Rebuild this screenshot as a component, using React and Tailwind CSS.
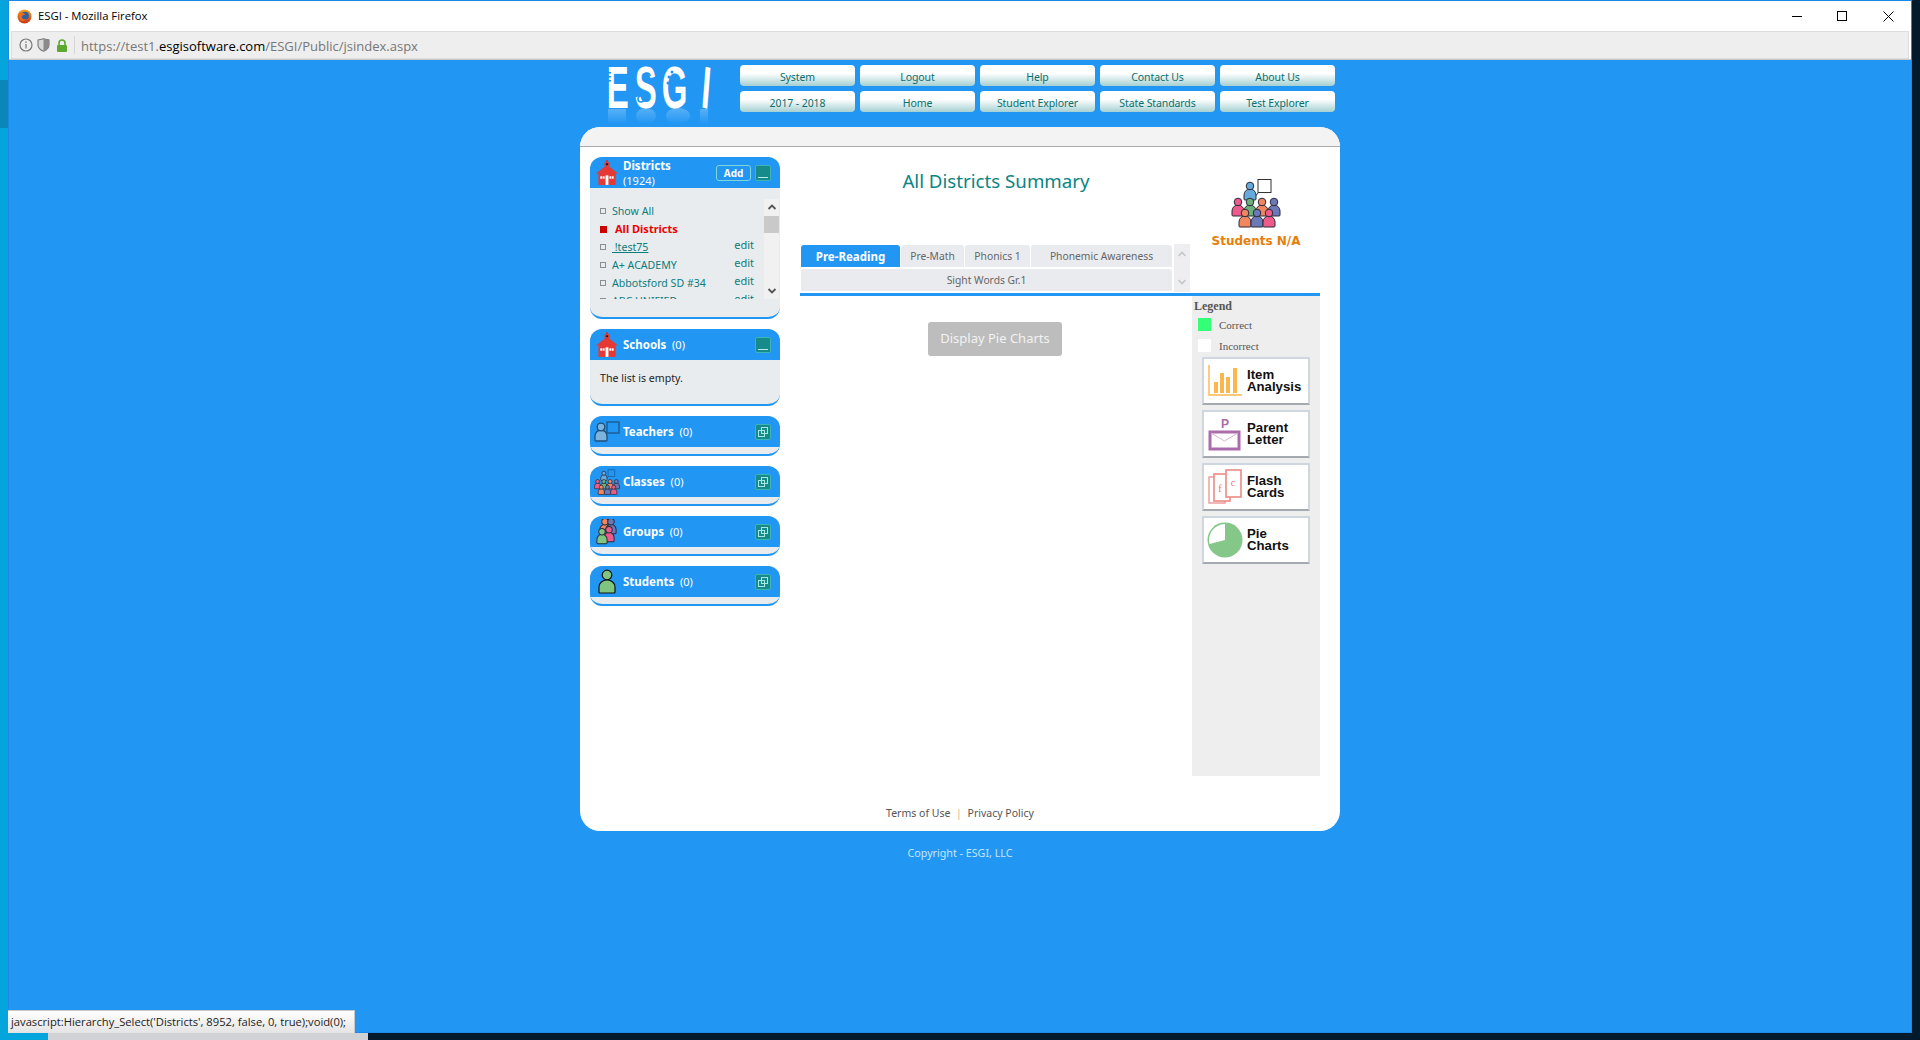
import React from 'react';

const NAV_ROWS = [
  ['System', 'Logout', 'Help', 'Contact Us', 'About Us'],
  ['2017 - 2018', 'Home', 'Student Explorer', 'State Standards', 'Test Explorer'],
];

const DISTRICTS = [
  { name: '\u00a0!test75', underline: true },
  { name: 'A+ ACADEMY' },
  { name: 'Abbotsford SD #34' },
  { name: 'ABC UNIFIED' },
];

// one figure of the people icons, drawn round (x, y)
const Person = ({ x, y, s = 1, fill, stroke = '#2b2b3a', sw = 1 }) => (
  <g transform={`translate(${x} ${y}) scale(${s})`} stroke={stroke} strokeWidth={sw / s} strokeLinejoin="round" fill={fill}>
    <path d="M-6 8 v-4 a6 6 0 0 1 12 0 v4 q0 1 -1 1 h-10 q-1 0 -1 -1 z" />
    <circle cx="0" cy="-5" r="3.8" />
  </g>
);

const ClassGroup = ({ sw = 1, board = '#333', boardFill = '#fff' }) => (
  <>
    <rect x="27" y="1.5" width="13" height="13" fill={boardFill} stroke={board} strokeWidth={sw} />
    <path d="M27 15 L22 21" stroke={board} strokeWidth={sw} />
    <Person x={19} y={13} fill="#66a9dc" sw={sw} />
    <Person x={7} y={29} fill="#ee5b8b" sw={sw} />
    <Person x={43} y={29} fill="#6c79b8" sw={sw} />
    <Person x={19} y={29} fill="#6cb07a" sw={sw} />
    <Person x={31} y={29} fill="#f2875f" sw={sw} />
    <Person x={14} y={40} fill="#f2875f" sw={sw} />
    <Person x={26} y={40} fill="#6c79b8" sw={sw} />
    <Person x={38} y={40} fill="#ee5b8b" sw={sw} />
  </>
);

const SchoolIcon = () => (
  <svg className="shrink-0" width="22" height="25" viewBox="0 0 23 26">
    <rect x="10.5" y="0" width="2" height="3" fill="#c63a3a" />
    <circle cx="11.5" cy="4.5" r="2.8" fill="#e53935" />
    <circle cx="11.5" cy="4.5" r="1.2" fill="#111" />
    <path d="M0 14 L11.5 5 L23 14 Z" fill="#e53935" />
    <rect x="2.5" y="13" width="18" height="13" fill="#e53935" />
    <rect x="4.5" y="17" width="2" height="2.5" fill="#fff" />
    <rect x="7" y="17" width="2" height="2.5" fill="#fff" />
    <rect x="14" y="17" width="2" height="2.5" fill="#fff" />
    <rect x="16.5" y="17" width="2" height="2.5" fill="#fff" />
    <rect x="10" y="16" width="3" height="10" fill="#fff" />
  </svg>
);

const TeacherIcon = () => (
  <svg className="shrink-0" width="26" height="22" viewBox="0 0 26 22">
    <rect x="13" y="1" width="12" height="11" fill="none" stroke="#1a5c92" strokeWidth="1.4" />
    <path d="M13 13 L10 16" stroke="#1a5c92" strokeWidth="1.2" />
    <Person x={7} y={11} s={1} fill="#7db4de" stroke="#1f4e79" sw={1.3} />
  </svg>
);

const ClassesIcon = () => (
  <svg className="shrink-0" width="26" height="26" viewBox="0 0 50 50">
    <ClassGroup sw={1.4} board="#1a5c92" boardFill="none" />
  </svg>
);

const GroupsIcon = () => (
  <svg className="shrink-0" width="22" height="26" viewBox="0 0 22 26">
    <Person x={9} y={7} s={0.85} fill="#f2875f" />
    <Person x={15} y={7} s={0.85} fill="#6c79b8" />
    <Person x={13} y={15} s={0.85} fill="#ee5b8b" />
    <Person x={6} y={17} s={0.85} fill="#7fc47f" />
  </svg>
);

const StudentIcon = () => (
  <svg className="shrink-0" width="18" height="25" viewBox="0 0 18 25">
    <circle cx="9" cy="6" r="4.8" fill="#7fc47f" stroke="#111" strokeWidth="1.2" />
    <path d="M1 23 v-5 a8 7 0 0 1 16 0 v5 q0 1 -1 1 h-14 q-1 0 -1 -1 z" fill="#7fc47f" stroke="#111" strokeWidth="1.2" />
  </svg>
);

const CollapseBtn = () => (
  <span className="flex w-4 h-4 items-end justify-center rounded-[2px] border border-[#3db5b5] bg-[#178a8c] pb-[2px]">
    <span className="block w-[10px] h-px bg-[#b5eee6]" />
  </span>
);

const ExpandBtn = () => (
  <span className="flex w-4 h-4 items-center justify-center rounded-[2px] border border-[#3db5b5] bg-[#178a8c]">
    <svg width="12" height="12" viewBox="0 0 12 12" fill="none" stroke="#a5e8df" strokeWidth="1">
      <rect x="4.5" y="1.5" width="6" height="6" />
      <rect x="1.5" y="4.5" width="6" height="6" />
    </svg>
  </span>
);

const Section = ({ icon, title, count, open, add, children }) => (
  <div className="rounded-[12px] overflow-hidden border-b-2 border-[#2196f3] bg-[#e9ecee]">
    <div className="h-[31px] flex items-center bg-[#2196f3] pl-[6px] pr-[9px] text-white text-[11px] leading-[15px]">
      <span className="w-[22px] mr-[5px] flex justify-center shrink-0">{icon}</span>
      {add ? (
        <span className="flex-1">
          <b className="block text-[11.5px]">{title}</b>
          ({count})
        </span>
      ) : (
        <span className="flex-1">
          <b className="text-[11.5px]">{title}</b>&nbsp; ({count})
        </span>
      )}
      {add && (
        <span className="mr-[4px] w-[35px] h-4 rounded-[3px] border border-[#7fd6d6] text-center font-bold text-[10px] leading-[14px]">Add</span>
      )}
      {open ? <CollapseBtn /> : <ExpandBtn />}
    </div>
    {children}
    {!open && <div className="h-[7px]" />}
  </div>
);

const DistrictList = () => (
  <div className="h-[129px] pt-[11px] flex items-start">
    <div className="w-[174px] h-[100px] overflow-hidden pl-[10px] pr-[10px] pt-[3px] text-[10.6px] leading-[18px] text-[#0b7c7c]">
      <div className="h-[18px] flex items-center">
        <span className="w-[6px] h-[6px] border border-[#8a8f92] mr-[6px]" />
        Show All
      </div>
      <div className="h-[18px] flex items-center text-[11px] text-[#f00000] font-bold">
        <span className="w-[7px] h-[7px] bg-[#cc0000] mr-[8px]" />
        All Districts
      </div>
      {DISTRICTS.map((d) => (
        <div key={d.name} className="h-[18px] flex items-center">
          <span className="w-[6px] h-[6px] border border-[#8a8f92] mr-[6px] shrink-0" />
          <span className={d.underline ? 'underline flex-1' : 'flex-1'}>{d.name}</span>
          <span className="-mt-[4px] text-[11px]">edit</span>
        </div>
      ))}
    </div>
    <div className="w-[15px] h-[100px] bg-[#f1f1f1] flex flex-col items-center">
      <svg className="mt-[4px]" width="10" height="8" viewBox="0 0 10 8" fill="none" stroke="#555" strokeWidth="1.8"><path d="M1.5 6 L5 2.5 L8.5 6" /></svg>
      <span className="block w-full h-[17px] bg-[#c9c9c9] mt-[5px]" />
      <svg className="mt-auto mb-[4px]" width="10" height="8" viewBox="0 0 10 8" fill="none" stroke="#555" strokeWidth="1.8"><path d="M1.5 2 L5 5.5 L8.5 2" /></svg>
    </div>
  </div>
);

const ItemAnalysisIcon = () => (
  <svg width="36" height="34" viewBox="0 0 36 34" fill="#fcb64e">
    <path d="M2 1 V31 H35" fill="none" stroke="#fcb64e" strokeWidth="1.4" />
    <rect x="7" y="18" width="4" height="11" />
    <rect x="13" y="9" width="4" height="20" />
    <rect x="19" y="13" width="4" height="16" />
    <rect x="26" y="4" width="4" height="25" />
  </svg>
);

const ParentLetterIcon = () => (
  <svg width="34" height="34" viewBox="0 0 34 34">
    <text x="17" y="11" textAnchor="middle" fontFamily="Liberation Sans, sans-serif" fontWeight="700" fontSize="12" fill="#ab6cab">P</text>
    <rect x="2" y="15" width="29" height="17" fill="#fff" stroke="#ab6cab" strokeWidth="3" />
    <path d="M3 16 L16.5 24 L30 16" fill="none" stroke="#d9b5d9" strokeWidth="1" />
  </svg>
);

const FlashCardsIcon = () => (
  <svg width="34" height="36" viewBox="0 0 34 36">
    <rect x="1" y="8" width="16" height="26" fill="#fff" stroke="#ee9a96" strokeWidth="1.4" />
    <rect x="6" y="5" width="16" height="27" fill="#fff" stroke="#ec8a86" strokeWidth="1.6" />
    <rect x="18" y="1" width="15" height="27" fill="#fff" stroke="#ec8a86" strokeWidth="1.6" />
    <text x="12" y="23" textAnchor="middle" fontFamily="Liberation Serif, serif" fontSize="10" fill="#ee6f6f">f</text>
    <text x="25" y="17" textAnchor="middle" fontFamily="Liberation Serif, serif" fontSize="10" fill="#ee6f6f">c</text>
  </svg>
);

const PieChartsIcon = () => (
  <svg width="36" height="36" viewBox="0 0 36 36">
    <circle cx="18" cy="18" r="17.5" fill="#84c788" />
    <path d="M18 18 L18 2 A16 16 0 0 0 2.5 22 Z" fill="#fff" />
  </svg>
);

const TOOLS = [
  { id: 'item', icon: <ItemAnalysisIcon />, lines: ['Item', 'Analysis'] },
  { id: 'parent', icon: <ParentLetterIcon />, lines: ['Parent', 'Letter'] },
  { id: 'flash', icon: <FlashCardsIcon />, lines: ['Flash', 'Cards'] },
  { id: 'pie', icon: <PieChartsIcon />, lines: ['Pie', 'Charts'] },
];

const FirefoxIcon = () => (
  <svg width="15" height="15" viewBox="0 0 16 16">
    <defs>
      <linearGradient id="ffg" x1="0" y1="0" x2="0" y2="1">
        <stop offset="0" stopColor="#f5a623" />
        <stop offset="1" stopColor="#c8321c" />
      </linearGradient>
    </defs>
    <circle cx="8" cy="8" r="7.5" fill="url(#ffg)" />
    <circle cx="8.5" cy="7" r="4.2" fill="#2f5f9e" />
    <path d="M3 4 Q7 3 9 6 Q5 6 5 9 Q6 12 10 11 Q7 14 4 12 Q1 8 3 4 Z" fill="#e8701e" />
  </svg>
);

const Logo = () => (
  <svg width="112" height="62" viewBox="0 0 112 62">
    <defs>
      <linearGradient id="fade" x1="0" y1="0" x2="0" y2="1">
        <stop offset="0" stopColor="#fff" stopOpacity="0.25" />
        <stop offset="1" stopColor="#fff" stopOpacity="0" />
      </linearGradient>
    </defs>
    <g transform="scale(0.55 1)">
      <text x="5" y="44" rotate="0 0 0 8" fontFamily="Liberation Sans, sans-serif" fontWeight="700" fontSize="60" fill="#fff">
        <tspan x="5">E</tspan>
        <tspan x="56">S</tspan>
        <tspan x="105">G</tspan>
        <tspan x="175" dy="-1" rotate="8">I</tspan>
      </text>
    </g>
    {/* cut-outs that give the letters their curls */}
    <g fill="none" stroke="#2196f3" strokeWidth="1.6">
      <path d="M46 12 a3 3 0 1 0 -3 3" />
      <path d="M40 35 a3 3 0 1 1 -3 -3" />
    </g>
    <g fill="#2196f3">
      <circle cx="68" cy="8" r="1.5" />
      <circle cx="65" cy="13" r="1.5" />
      <circle cx="64" cy="19" r="1.5" />
      <rect x="3" y="8" width="4" height="1.5" />
      <rect x="3" y="12" width="4" height="1.5" />
      <rect x="3" y="16" width="4" height="1.5" />
    </g>
    {/* faint reflection below the word */}
    <g fill="url(#fade)">
      <rect x="4" y="45" width="18" height="15" />
      <ellipse cx="42" cy="52" rx="10" ry="8" />
      <ellipse cx="74" cy="52" rx="12" ry="8" />
      <rect x="96" y="45" width="8" height="15" />
    </g>
  </svg>
);

export default function App() {
  return (
    <div className="relative h-[1040px] w-[1920px] overflow-hidden bg-[#021a2b] font-['Noto_Sans',sans-serif]">
      <div className="flex h-[1033px]">
        <div className="w-2 bg-[#04a4dc] flex flex-col">
          <div className="h-[80px]" />
          <div className="h-[48px] bg-[#0a87b8]" />
        </div>

        <div className="flex-1 flex flex-col border-t border-x border-b border-[#1e88e5] bg-[#2196f3]">
          {/* title bar */}
          <div className="h-[30px] shrink-0 bg-white flex items-center pl-[8px] pr-[17px] text-[11.3px] text-black font-['Open_Sans',sans-serif]">
            <FirefoxIcon />
            <span className="ml-[6px]">ESGI - Mozilla Firefox</span>
            <span className="ml-auto flex items-center">
              <span className="block w-[10px] h-px bg-black mr-[35px]" />
              <span className="block w-[10px] h-[10px] border border-black mr-[36px]" />
              <svg width="11" height="11" viewBox="0 0 11 11" stroke="#000" strokeWidth="1"><path d="M0.5 0.5 L10.5 10.5 M10.5 0.5 L0.5 10.5" /></svg>
            </span>
          </div>

          {/* url bar */}
          <div className="h-[29px] shrink-0 bg-white px-[2px] border-b border-[#c8c8c8]">
            <div className="h-[28px] bg-[#eeeeee] border border-[#dddddd] flex items-center pl-[7px] text-[13px] text-[#777] font-['Open_Sans',sans-serif]">
              <svg width="14" height="14" viewBox="0 0 14 14" fill="none" stroke="#777" strokeWidth="1.2">
                <circle cx="7" cy="7" r="6" />
                <path d="M7 6 V10.5 M7 3.5 V5" />
              </svg>
              <svg className="ml-[4px]" width="13" height="14" viewBox="0 0 13 14">
                <path d="M1 2 L6.5 0.8 L12 2 V7 Q12 11 6.5 13.2 Q1 11 1 7 Z" fill="#d8d8d8" stroke="#777" strokeWidth="1.1" />
                <path d="M6.5 1 L12 2 V7 Q12 11 6.5 13 Z" fill="#8a8a8a" />
              </svg>
              <svg className="ml-[6px]" width="12" height="13" viewBox="0 0 12 13">
                <path d="M3 6 V4 a3 3 0 0 1 6 0 V6" fill="none" stroke="#5da82f" strokeWidth="1.6" />
                <rect x="1" y="6" width="10" height="7" rx="1" fill="#5da82f" />
              </svg>
              <span className="ml-[6px] h-[18px] w-px bg-[#d6d6d6]" />
              <span className="ml-[6px] mt-[3px]">
                https://test1.<span className="text-black">esgisoftware.com</span>/ESGI/Public/jsindex.aspx
              </span>
            </div>
          </div>

          {/* page */}
          <div className="flex-1 flex flex-col items-center">
            <div className="w-[760px] h-[67px] flex shrink-0">
              <div className="w-[160px] pl-[24px] pt-[4px]">
                <Logo />
              </div>
              <div className="w-[595px] pt-[5px] flex flex-col gap-[5px]">
                {NAV_ROWS.map((row) => (
                  <div key={row[0]} className="flex gap-[5px]">
                    {row.map((label) => (
                      <div key={label} className="w-[115px] h-[21px] rounded-[4px] bg-linear-to-b from-white from-40% to-[#a5d0d2] text-center text-[10.5px] tracking-[-0.1px] leading-[24px] text-[#0a6f6f]">
                        {label}
                      </div>
                    ))}
                  </div>
                ))}
              </div>
            </div>

            <div className="w-[760px] h-[704px] bg-white rounded-[20px] overflow-hidden shrink-0">
              <div className="h-[20px] bg-[#f3f3f3] border-b border-[#aaaaaa]" />
              <div className="flex px-[10px]">
                <div className="w-[190px] pt-[10px] flex flex-col gap-[10px]">
                  <Section icon={<SchoolIcon />} title="Districts" count="1924" open add>
                    <DistrictList />
                  </Section>
                  <Section icon={<SchoolIcon />} title="Schools" count="0" open>
                    <div className="h-[44px] pl-[10px] pt-[9px] text-[10.6px] leading-[18px] text-[#222]">The list is empty.</div>
                  </Section>
                  <Section icon={<TeacherIcon />} title="Teachers" count="0" />
                  <Section icon={<ClassesIcon />} title="Classes" count="0" />
                  <Section icon={<GroupsIcon />} title="Groups" count="0" />
                  <Section icon={<StudentIcon />} title="Students" count="0" />
                </div>

                <div className="w-[520px] ml-[20px]">
                  <div className="flex h-[146px]">
                    <div className="w-[392px]">
                      <h1 className="h-[97px] pt-[20px] text-center text-[18.7px] leading-[28px] text-[#0a8484]">All Districts Summary</h1>
                      <div className="flex">
                        <div className="w-[372px] text-[10.3px] text-[#666]">
                          <div className="flex gap-px h-[22px] ml-px mt-px leading-[23px] text-center">
                            <span className="w-[99px] rounded-t-[3px] bg-[#2196f3] text-white text-[11.5px] font-bold">Pre-Reading</span>
                            <span className="w-[63px] rounded-t-[3px] bg-[#e9ebee]">Pre-Math</span>
                            <span className="w-[65px] rounded-t-[3px] bg-[#e9ebee]">Phonics 1</span>
                            <span className="w-[141px] rounded-t-[3px] bg-[#e9ebee]">Phonemic Awareness</span>
                          </div>
                          <div className="h-[22px] ml-px mt-[2px] rounded-t-[3px] bg-[#e9ebee] text-center leading-[23px]">Sight Words Gr.1</div>
                        </div>
                        <div className="ml-[2px] w-4 h-[48px] bg-[#eeeef0] flex flex-col items-center justify-between py-[6px]">
                          <svg width="10" height="8" viewBox="0 0 10 8" fill="none" stroke="#c4c6ca" strokeWidth="1.6"><path d="M1.5 6 L5 2.5 L8.5 6" /></svg>
                          <svg width="10" height="8" viewBox="0 0 10 8" fill="none" stroke="#c4c6ca" strokeWidth="1.6"><path d="M1.5 2 L5 5.5 L8.5 2" /></svg>
                        </div>
                      </div>
                    </div>
                    <div className="w-[128px] flex flex-col items-center pt-[31px]">
                      <svg width="50" height="50" viewBox="0 0 50 50">
                        <ClassGroup />
                      </svg>
                      <span className="mt-[5px] text-[12px] leading-[16px] font-bold text-[#e67e0a] font-['DejaVu_Sans',sans-serif]">Students N/A</span>
                    </div>
                  </div>

                  <div className="h-[3px] bg-[#2196f3]" />

                  <div className="flex">
                    <div className="w-[392px] pt-[26px] pr-[2px] flex justify-center">
                      <span className="w-[134px] h-[34px] rounded-[3px] bg-[#bdbdbd] text-center text-[13px] leading-[33px] text-[#f2f2f2]">Display Pie Charts</span>
                    </div>
                    <div className="w-[128px] h-[480px] bg-[#eeeeee] pt-[3px] text-[#555] font-['Liberation_Serif',serif]">
                      <div className="pl-[2px] text-[12px] leading-[14px] font-bold">Legend</div>
                      <div className="mt-[5px] pl-[6px] h-[13px] flex items-center text-[11px]">
                        <span className="w-[13px] h-[13px] bg-[#33ff77] mr-[8px]" />
                        <span className="pt-[2px]">Correct</span>
                      </div>
                      <div className="mt-[8px] pl-[6px] h-[13px] flex items-center text-[11px]">
                        <span className="w-[13px] h-[13px] bg-white mr-[8px]" />
                        <span className="pt-px">Incorrect</span>
                      </div>
                      <div className="mt-[5px] ml-[10px] w-[108px] flex flex-col gap-[5px]">
                        {TOOLS.map((t) => (
                          <div key={t.id} className="h-[48px] bg-white border-2 border-[#d0d6e0] border-b-[#a5a9b0] flex items-center pl-[1px]">
                            <span className="w-[40px] flex justify-center shrink-0">{t.icon}</span>
                            <span className="ml-[2px] text-[13.2px] leading-[12px] font-bold text-[#111] font-['Liberation_Sans',sans-serif]">
                              {t.lines[0]}
                              <br />
                              {t.lines[1]}
                            </span>
                          </div>
                        ))}
                      </div>
                    </div>
                  </div>
                </div>
              </div>
              <div className="pt-[29px] text-center text-[10.5px] leading-[16px] text-[#555]">
                Terms of Use <span className="text-[#d9b48f] mx-[3px]">|</span> Privacy Policy
              </div>
            </div>

            <div className="mt-[14px] text-[10.7px] leading-[16px] text-[#c5e6ff]">Copyright - ESGI, LLC</div>
          </div>
        </div>

        <div className="w-2 bg-[#021a2b]" />
      </div>

      {/* desktop strip under the window */}
      <div className="flex h-[7px]">
        <div className="w-[48px] bg-[#04a4dc]" />
        <div className="w-[320px] bg-[#d0d2d6]" />
      </div>

      {/* link preview over the page */}
      <div className="absolute left-2 top-[1010px] w-[347px] h-[23px] bg-linear-to-b from-white to-[#e4e4e4] border-t border-r border-[#c8c8c8] pl-[3px] text-[11.2px] leading-[22px] text-[#222] font-['Open_Sans',sans-serif] whitespace-nowrap">
        javascript:Hierarchy_Select('Districts', 8952, false, 0, true);void(0);
      </div>
    </div>
  );
}
